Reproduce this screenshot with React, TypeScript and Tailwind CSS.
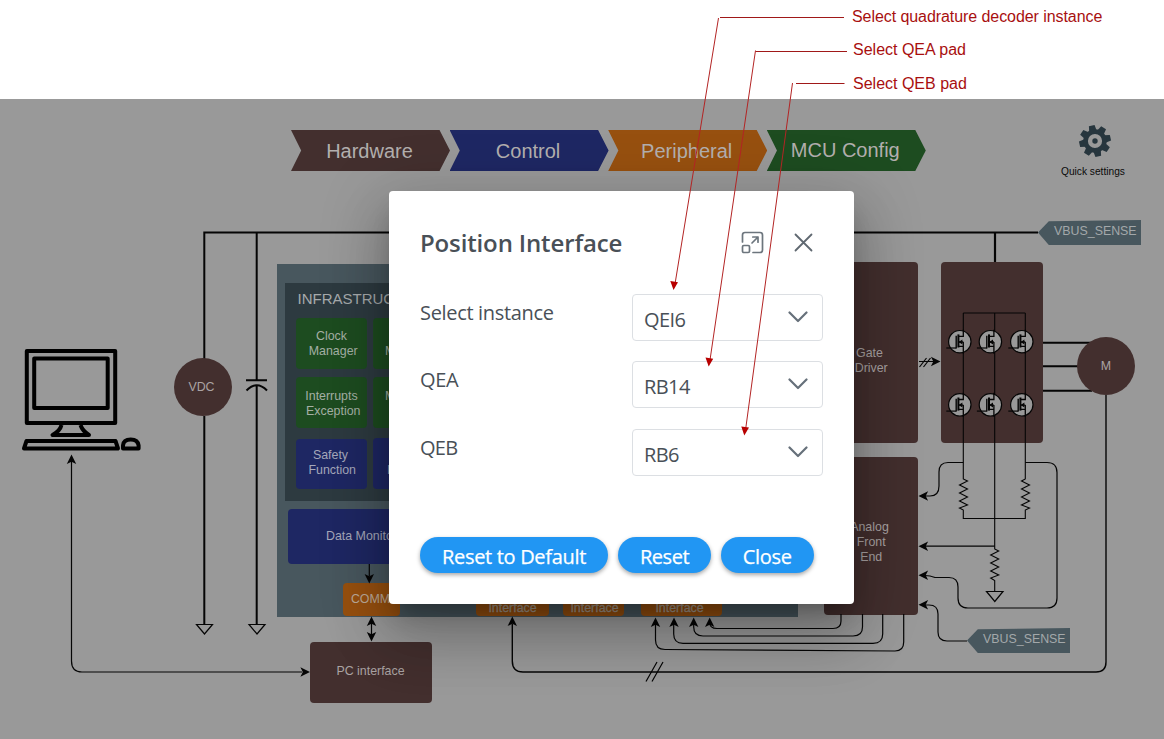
import React from "react";

const INK = "#050505";

function Step({ label, fill, text = "" }: { label: string; fill: string; text?: string }) {
  return (
    <div
      className={`flex h-[41px] w-[159px] items-center justify-center pr-[2px] text-[20px] leading-none text-[#b3afae] [clip-path:polygon(0_0,93.4%_0,100%_50%,93.4%_100%,0_100%,6.4%_50%)] ${fill}`}
    >
      <span className={text}>{label}</span>
    </div>
  );
}

function Block({ className, children }: { className: string; children?: React.ReactNode }) {
  return (
    <div
      className={`flex shrink-0 items-center justify-center rounded-[4px] text-center text-[12.4px] leading-[15px] whitespace-pre ${className}`}
    >
      {children}
    </div>
  );
}

function Mosfet({ x, y }: { x: number; y: number }) {
  return (
    <g transform={`translate(${x} ${y})`} fill="none" stroke={INK}>
      <circle r="11.2" fill="#999999" strokeWidth="1.2" />
      <path d="M-13.5 6.3H-3.6" strokeWidth="1.2" />
      <path d="M-3.6 6.8V-6" strokeWidth="1.4" />
      <path d="M-1.4-7.3V5.8" strokeWidth="2" />
      <path d="M-1.6-5.3H3.5V-12M-1.6 0.3H3.5M-1.6 4.6H3.5M3.5 0.3V12" strokeWidth="1.3" />
      <path d="M-1.2 0.3L2.6-2.2V2.800Z" fill={INK} stroke="none" />
    </g>
  );
}

function Head({ x, y, r }: { x: number; y: number; r: number }) {
  return <path transform={`translate(${x} ${y}) rotate(${r})`} d="M0 0L-9.600 4.700L-7.200 0L-9.600-4.700Z" fill={INK} stroke="none" />;
}

function Wires() {
  return (
    <svg className="absolute inset-0" width="1164" height="739" viewBox="0 0 1164 739" fill="none" stroke={INK}>
      <g strokeWidth="2">
        <path d="M204.300 359V232.500H1038M204.300 416V625M256.700 232.500V380M256.700 386V625" />
        <path d="M246 380.300H267M246.500 390.500Q256.700 380 267 390.500" />
        <path d="M995 232V262" strokeWidth="2.200" />
        <path d="M1043 342.700H1092M1043 366.300H1080M1043 390.700H1092" />
      </g>
      <g strokeWidth="1.200">
        <path d="M196.500 624.500H212.500L204.500 634ZM249 624.500H265L257 634ZM986.500 591.500H1003L994.800 601.500Z" />
        <path d="M71.500 459V661Q71.500 672 82 672H302" />
        <path d="M369.300 564V576M371.500 622V636" />
        <path d="M963.300 462.500H948Q939 462.500 939 472V486Q939 496 930 496H925" />
        <path d="M1025.300 462.500H1047Q1057 462.500 1057 472.500V598Q1057 608 1047 608H968Q958 608 958 598V587Q958 577.500 949 577.500H935Q930 575.500 925 575.500" />
        <path d="M967 641H947Q938 641 938 632V614Q938 605 929 605H925" />
        <path d="M994.700 546.200H925" />
        <path d="M841 614V621Q841 628.500 833 628.500H717Q709.500 628.500 709.500 622M862.500 614V627Q862.500 636 853 636H703Q693.700 636 693.700 627V624M882.700 614V634Q882.700 643.300 873 643.300H683Q673.700 643.300 673.700 634V624M903.700 614V642Q903.700 651 895 651L665 649.500Q655.500 649.500 655.500 640V624" />
        <path d="M1106 395V662Q1106 672 1096 672H523Q512.300 672 512.300 661V624" strokeWidth="1.400" />
        <path d="M646 681.500L657 662M652 681.500L663 662M919 361.500H934M919.500 367L926.500 358M923.500 367L930.500 358" />
      </g>
      <g strokeWidth="1.100">
        <path d="M963.300 313H1025.300M963.300 313V479L967.500 481L959.500 485L967.500 489L959.500 493L967.500 497L959.500 501L967.500 505L959.500 508L963.300 510V518.500H1025.300V510L1029.500 508L1021.500 505L1029.500 501L1021.500 497L1029.500 493L1021.500 489L1029.500 485L1021.500 481L1025.300 479V313" />
        <path d="M994.700 313V549L998.700 551L990.700 555L998.700 559L990.700 563L998.700 567L990.700 571L998.700 575L990.700 578L994.700 580.500V591.500" />
      </g>
      {[341.7, 404.8].map((y) => [959.8, 990.4, 1021.8].map((x) => <Mosfet key={`${x}-${y}`} x={x} y={y} />))}
      <Head x={71.5} y={454.5} r={-90} />
      <Head x={310} y={672} r={0} />
      <Head x={369.3} y={583.5} r={90} />
      <Head x={371.5} y={616.5} r={-90} />
      <Head x={371.5} y={641.500} r={90} />
      <Head x={918.5} y={496} r={180} />
      <Head x={918.5} y={546.2} r={180} />
      <Head x={918.5} y={575.3} r={180} />
      <Head x={918.5} y={604.7} r={180} />
      <Head x={940.5} y={361.5} r={0} />
      <Head x={512.3} y={616.5} r={-90} />
      <Head x={655.5} y={617.5} r={-90} />
      <Head x={674} y={617.5} r={-90} />
      <Head x={693.7} y={617.5} r={-90} />
      <Head x={709.7} y={617.5} r={-90} />
    </svg>
  );
}

function Computer() {
  return (
    <svg className="absolute top-[346px] left-[20px]" width="124" height="108" viewBox="20 346 124 108" fill="none" stroke="#000" strokeWidth="4" strokeLinejoin="round">
      <rect x="26.800" y="351" width="88.400" height="72" />
      <rect x="34.200" y="358.500" width="73.500" height="49.500" />
      <path d="M61.500 425Q60 431 52.500 435H89Q82.500 431 80.500 425" />
      <path d="M26.500 441H115.500L118 448.500H24Z" />
      <path d="M123 448.500V445.500Q123.500 439.500 130.700 439.500T138.600 445.500V448.500Z" />
    </svg>
  );
}

function Gear() {
  return (
    <svg width="34" height="34" viewBox="-17 -17 34 34" fill="#27363e">
      {[0, 45, 90, 135, 180, 225, 270, 315].map((a) => (
        <path key={a} transform={`rotate(${a - 12})`} d="M-3.800-10L-2.900-15.800H2.900L3.800-10Z" />
      ))}
      <circle r="9.400" fill="none" stroke="#27363e" strokeWidth="4.600" />
      <circle r="2.700" />
    </svg>
  );
}

function SenseTag({ className }: { className: string }) {
  return (
    <div
      className={`absolute flex h-[25px] w-[103px] items-center bg-[#48575e] pb-[2px] pl-[16px] text-[12.4px] leading-none text-[#a3a8aa] [clip-path:polygon(0_50%,10.5%_5%,100%_0,100%_100%,10.5%_100%)] ${className}`}
    >
      VBUS_SENSE
    </div>
  );
}

function McuPanel() {
  return (
    <section className="absolute top-[264px] left-[277px] flex h-[353px] w-[521px] flex-col bg-[#48575e] px-[8px] pt-[19px] pb-px">
      <div className="flex h-[218px] w-[400px] shrink-0 flex-col bg-[#2d3a40] pt-[8px] pl-[11px]">
        <h2 className="h-[27px] pl-[1.500px] text-[15px] leading-[15px] text-[#a6aaac]">INFRASTRUCTURE</h2>
        <div className="grid grid-cols-[71px_71px] gap-x-[6px]">
          <Block className="h-[51px] bg-[#1d4c20] text-[#a5b0a5]">{"Clock\n Manager"}</Block>
          <Block className="h-[51px] justify-start bg-[#1d4c20] pt-[15px] pl-[12px] text-[#a5b0a5]">M</Block>
          <Block className="mt-[8px] h-[51px] bg-[#1d4c20] pt-[3px] text-[#a5b0a5]">{"Interrupts\n Exception"}</Block>
          <Block className="mt-[8px] h-[51px] justify-start bg-[#1d4c20] pb-[13px] pl-[12px] text-[#a5b0a5]">M</Block>
          <Block className="mt-[11px] h-[50px] bg-[#1e2763] pr-[2px] pb-[2px] text-[#a5a8ba]">{"Safety\n Function"}</Block>
          <Block className="mt-[10px] h-[51px] justify-start bg-[#1e2763] pt-[14px] pl-[14px] text-[#a5a8ba]">I</Block>
        </div>
      </div>
      <Block className="mt-[8px] ml-[3px] h-[55px] w-[160px] justify-start bg-[#1e2763] pb-px pl-[38px] text-[#a5a8ba]">Data Monitor</Block>
      <div className="flex flex-1 items-end pl-[58px]">
        <Block className="h-[33px] w-[57px] bg-[#97500f] pr-[2px] text-[#bdab99]">COMM</Block>
        <Block className="ml-[76px] h-[36px] w-[73px] items-end bg-[#97500f] text-[11px] text-[#a59a8c] [-webkit-text-stroke:0.3px_#a59a8c]">Interface</Block>
        <Block className="ml-[14px] h-[36px] w-[61px] items-end bg-[#97500f] pl-[2px] text-[11px] text-[#a59a8c] [-webkit-text-stroke:0.3px_#a59a8c]">Interface</Block>
        <Block className="ml-[17px] h-[36px] w-[81px] items-end bg-[#97500f] pr-[4px] text-[11px] text-[#a59a8c] [-webkit-text-stroke:0.3px_#a59a8c]">Interface</Block>
      </div>
    </section>
  );
}

function Diagram() {
  return (
    <div className="absolute inset-0">
      <McuPanel />
      <Block className="absolute top-[641.500px] left-[309.500px] h-[61px] w-[122px] bg-[#432f2e] pb-[2px] text-[#aaa3a3]">PC interface</Block>
      <div className="absolute top-[262px] left-[824px] flex w-[94px] flex-col gap-[14px]">
        <Block className="h-[181px] bg-[#432f2e] pt-[16px] text-[#aaa3a3]"><span className="-ml-[3px]">{"Gate\n Driver"}</span></Block>
        <Block className="h-[158px] bg-[#432f2e] pt-[12px] text-[#aaa3a3]"><span className="-ml-[3px]">{"Analog\n Front\n End"}</span></Block>
      </div>
      <Block className="absolute top-[262px] left-[940.500px] h-[181px] w-[102.500px] bg-[#432f2e]" />
      <Wires />
      <Computer />
      <Block className="absolute top-[358px] left-[173.500px] size-[58px] rounded-full bg-[#432f2e] pr-[2px] text-[#aaa3a3]">VDC</Block>
      <Block className="absolute top-[337px] left-[1077px] size-[58px] rounded-full bg-[#432f2e] text-[#aaa3a3]">M</Block>
      <SenseTag className="top-[220px] left-[1038px]" />
      <SenseTag className="top-[628px] left-[967px]" />
    </div>
  );
}

function Field({ label, value, tracking }: { label: string; value: string; tracking: string }) {
  return (
    <div className="flex h-[67.700px] items-start justify-between">
      <label className={`mt-[7px] text-[20px] leading-[24px] text-[#495057] ${tracking}`}>{label}</label>
      <button type="button" className="flex h-[47px] w-[191px] items-center justify-between rounded-[4px] border border-[#dcdfe3] bg-white pr-[14px] pl-[11px]">
        <span className="mt-[5px] text-[20px] leading-[24px] tracking-[-0.600px] text-[#495057]">{value}</span>
        <svg className="-mt-px" width="20" height="14" viewBox="0 0 20 14" fill="none" stroke="#66707a" strokeWidth="2.200" strokeLinecap="round" strokeLinejoin="round">
          <path d="M1.500 2.500L10 11L18.500 2.500" />
        </svg>
      </button>
    </div>
  );
}

function PillButton({ className, children }: { className: string; children: React.ReactNode }) {
  return (
    <button
      type="button"
      className={`flex h-[36px] items-center justify-center rounded-full bg-[#2196f3] pt-[3px] text-[20px] leading-none font-medium whitespace-nowrap text-white shadow-[0_2px_4px_rgba(0,0,0,0.35)] [-webkit-text-stroke:0.250px_white] ${className}`}
    >
      {children}
    </button>
  );
}

function Dialog() {
  return (
    <div
      role="dialog"
      className="absolute top-[191px] left-[389px] flex h-[412.500px] w-[465px] flex-col rounded-[4px] bg-white px-[31px] font-['Open_Sans','Noto_Sans',sans-serif] shadow-[0_14px_20px_-8px_rgba(0,0,0,0.25),0_34px_54px_5px_rgba(0,0,0,0.18),0_13px_64px_12px_rgba(0,0,0,0.14)]"
    >
      <header className="flex h-[102.500px] items-center justify-between pr-[10px]">
        <h1 className="mt-[2px] text-[24px] leading-[30px] font-semibold tracking-[-0.140px] text-[#495057]">Position Interface</h1>
        <div className="flex items-center gap-[30px]">
          <svg width="23" height="23" viewBox="0 0 23 23" fill="none" stroke="#6c757d" strokeWidth="1.700" strokeLinecap="round" strokeLinejoin="round">
            <path d="M1.500 11V4Q1.500 1.500 4 1.500H19Q21.500 1.500 21.500 4V19Q21.500 21.500 19 21.500H12" />
            <rect x="1.500" y="14.500" width="7" height="7" rx="1.300" />
            <path d="M11 12L17 6M11.800 6H17V11.200" />
          </svg>
          <svg width="19" height="19" viewBox="0 0 19 19" fill="none" stroke="#5f6870" strokeWidth="1.800" strokeLinecap="round">
            <path d="M1.500 1.500L17.500 17.500M17.500 1.500L1.500 17.500" />
          </svg>
        </div>
      </header>
      <div className="flex flex-1 flex-col">
        <Field label="Select instance" value="QEI6" tracking="tracking-[-0.330px]" />
        <Field label="QEA" value="RB14" tracking="tracking-[-0.300px]" />
        <Field label="QEB" value="RB6" tracking="tracking-[-0.700px]" />
      </div>
      <footer className="flex gap-[10px] pb-[30.500px]">
        <PillButton className="w-[188px] tracking-[-0.320px]">Reset to Default</PillButton>
        <PillButton className="w-[93px] tracking-[-0.450px]">Reset</PillButton>
        <PillButton className="w-[92.500px] tracking-[-0.300px]">Close</PillButton>
      </footer>
    </div>
  );
}

function Callouts() {
  return (
    <>
      <svg className="absolute inset-0" width="1164" height="739" viewBox="0 0 1164 739" fill="none" stroke="#b32424" strokeWidth="1">
        <path d="M720 17.500H844M755.500 51.500H847M796 83.500H844.500" stroke="#a01818" />
        <path d="M718.500 18L675 284M755.500 50.500L710 360M792.500 83L745.800 428" />
        <g fill="#b80000" stroke="none">
          <path d="M673.500 290L670.300 281L678 282.300Z" />
          <path d="M708.700 366.500L705.500 357.500L713.200 358.700Z" />
          <path d="M744.300 435.500L741.300 426.500L749 427.500Z" />
        </g>
      </svg>
      <div className="absolute top-0 left-[852px] flex flex-col text-[16px] whitespace-nowrap text-[#a80f0f]">
        <span className="h-[33px] leading-[33px] tracking-[-0.070px]">Select quadrature decoder instance</span>
        <span className="h-[34px] pl-px leading-[33px]">Select QEA pad</span>
        <span className="h-[33px] pl-px leading-[33px]">Select QEB pad</span>
      </div>
    </>
  );
}

export default function App() {
  return (
    <div className="relative h-[739px] w-[1164px] overflow-hidden bg-white pt-[99px] font-['Liberation_Sans',Arial,sans-serif]">
      <main className="flex h-[640px] items-start bg-[#999999] pl-[291px]">
        <nav className="mt-[31px] grid grid-cols-[158.600px_158.600px_158.600px_158.600px]">
          <Step label="Hardware" fill="bg-[#432f2e]" />
          <Step label="Control" fill="bg-[#1e2763]" />
          <Step label="Peripheral" fill="bg-[#97500f]" />
          <Step label="MCU Config" fill="bg-[#1d4c20]" text="-mt-[2px]" />
        </nav>
        <button type="button" className="mt-[25px] ml-[127.600px] flex w-[80px] flex-col items-center">
          <span className="ml-[5px] flex">
            <Gear />
          </span>
          <span className="mt-[8px] text-[10.200px] leading-[12px] whitespace-nowrap text-[#0a0a0a]">Quick settings</span>
        </button>
      </main>
      <Diagram />
      <Dialog />
      <Callouts />
    </div>
  );
}
